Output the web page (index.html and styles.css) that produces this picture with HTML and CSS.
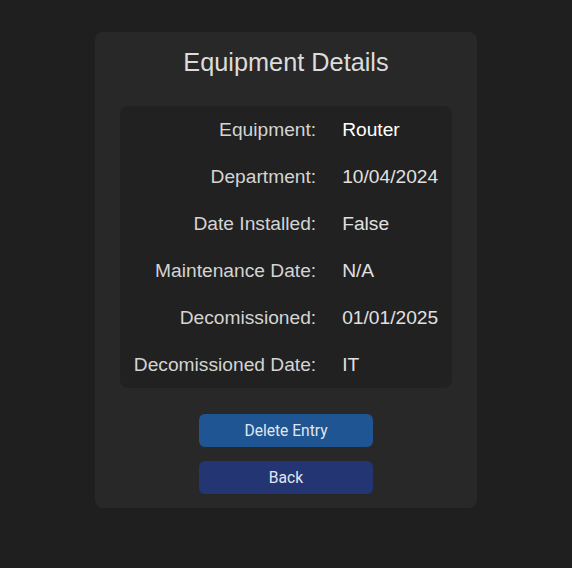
FILE: index.html
```html
<!DOCTYPE html>
<html lang="en">
<head>
<meta charset="utf-8">
<title>Equipment Details</title>
<link rel="stylesheet" href="styles.css">
</head>
<body>
<main class="card">
  <h1 class="title">Equipment Details</h1>
  <div class="details">
    <div class="label">Equipment:</div><div class="value value-main">Router</div>
    <div class="label">Department:</div><div class="value">10/04/2024</div>
    <div class="label">Date Installed:</div><div class="value">False</div>
    <div class="label">Maintenance Date:</div><div class="value">N/A</div>
    <div class="label">Decomissioned:</div><div class="value">01/01/2025</div>
    <div class="label">Decomissioned Date:</div><div class="value">IT</div>
  </div>
  <div class="actions">
    <button class="btn btn-delete" type="button">Delete Entry</button>
    <button class="btn btn-back" type="button">Back</button>
  </div>
</main>
</body>
</html>
```
FILE: styles.css
```css
html, body {
  margin: 0;
  padding: 0;
}
body {
  background: #1f1f1f;
  font-family: "Liberation Sans", Arial, sans-serif;
  min-height: 568px;
  padding-top: 32px;
  box-sizing: border-box;
}
.card {
  width: 382px;
  margin: 0 auto;
  background: #282828;
  border-radius: 8px;
  padding: 15px 25px 14px;
  box-sizing: border-box;
}
.title {
  margin: 0 0 29px;
  height: 30px;
  line-height: 30px;
  text-align: center;
  font-size: 25.3px;
  font-weight: normal;
  color: #dcdcdc;
}
.details {
  background: #212121;
  border-radius: 8px;
  display: grid;
  grid-template-columns: auto auto;
  grid-auto-rows: 47px;
  column-gap: 26px;
  justify-content: center;
  align-items: center;
  font-size: 19.2px;
}
.label {
  text-align: right;
  color: #d4d4d4;
}
.value {
  color: #e0e0e0;
}
.value-main {
  color: #ffffff;
}
.actions {
  display: flex;
  flex-direction: column;
  align-items: center;
  gap: 14px;
  margin-top: 26px;
}
.btn {
  width: 174px;
  height: 33px;
  border: none;
  border-radius: 6px;
  font-family: Roboto, "Liberation Sans", sans-serif;
  font-size: 15.6px;
  color: #e2e6ee;
  padding: 0;
  cursor: pointer;
}
.btn-delete {
  background: #1e5592;
}
.btn-back {
  background: #243574;
}
```
